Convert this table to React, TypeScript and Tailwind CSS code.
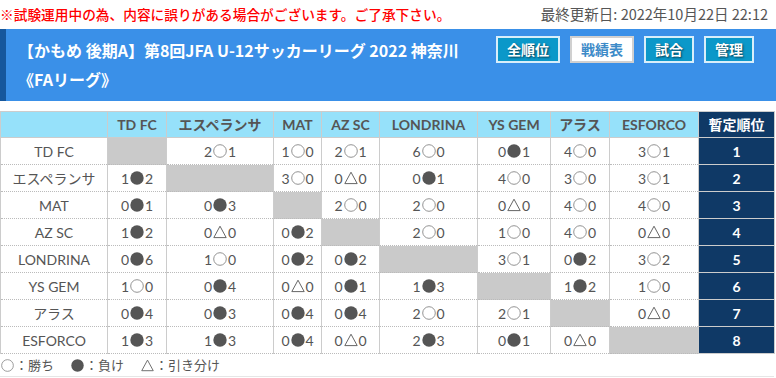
import React from "react";

const teams = ["TD FC", "エスペランサ", "MAT", "AZ SC", "LONDRINA", "YS GEM", "アラス", "ESFORCO"];
const widths = [107, 59, 107, 48, 58, 98, 73, 59, 89, 76];

const data: string[][] = [
  ["", "2○1", "1○0", "2○1", "6○0", "0●1", "4○0", "3○1"],
  ["1●2", "", "3○0", "0△0", "0●1", "4○0", "3○0", "3○1"],
  ["0●1", "0●3", "", "2○0", "2○0", "0△0", "4○0", "4○0"],
  ["1●2", "0△0", "0●2", "", "2○0", "1○0", "4○0", "0△0"],
  ["0●6", "1○0", "0●2", "0●2", "", "3○1", "0●2", "3○2"],
  ["1○0", "0●4", "0△0", "0●1", "1●3", "", "1●2", "1○0"],
  ["0●4", "0●3", "0●4", "0●4", "2○0", "2○1", "", "0△0"],
  ["1●3", "1●3", "0●4", "0△0", "2●3", "0●1", "0△0", ""],
];

function Mark({ m, size = 14 }: { m: string; size?: number }) {
  if (m === "○")
    return (
      <svg width={size} height={size} viewBox="0 0 14 14" className="inline-block mx-[1px] align-[-1px]">
        <circle cx="7" cy="7" r="6.3" fill="none" stroke="#888" strokeWidth="0.9" />
      </svg>
    );
  if (m === "●")
    return (
      <svg width={size} height={size} viewBox="0 0 14 14" className="inline-block mx-[1px] align-[-1px]">
        <circle cx="7" cy="7" r="6.7" fill="#555" />
      </svg>
    );
  return (
    <svg width={size} height={size} viewBox="0 0 14 14" className="inline-block mx-[1px] align-[-1px]">
      <path d="M7 1.2 L13.2 12.6 L0.8 12.6 Z" fill="none" stroke="#666" strokeWidth="1" />
    </svg>
  );
}

function Score({ s }: { s: string }) {
  if (!s) return null;
  return (
    <span>
      {s[0]}
      <Mark m={s[1]} />
      {s[2]}
    </span>
  );
}

const cellCls =
  "border-x border-x-[#cccccc] border-y border-y-[#bbbbbb] [border-top-style:dotted] [border-bottom-style:dotted] [border-left-style:solid] [border-right-style:solid] text-[14px] text-[#555] text-center p-0";

export default function App() {
  const font = { fontFamily: "Lato, 'Noto Sans CJK JP', sans-serif" };
  return (
    <div className="w-[776px] h-[378px] bg-white overflow-hidden" style={{ fontFamily: "'Noto Sans CJK JP', sans-serif" }}>
      <div className="h-[29px] flex items-center justify-between pr-[8px]">
        <div className="text-[13.7px] text-[#ff0000] font-medium leading-none">
          ※試験運用中の為、内容に誤りがある場合がございます。ご了承下さい。
        </div>
        <div className="text-[14.5px] text-[#555] leading-none">最終更新日: 2022年10月22日 22:12</div>
      </div>
      <div className="h-[72px] bg-[#3a90e8] border-l-[6px] border-[#16579c] flex justify-between pl-[12px] pr-[22px]">
        <div className="pt-[7px] text-white font-bold text-[16px] leading-[29px]">
          【かもめ 後期A】第8回JFA U-12サッカーリーグ 2022 神奈川
          <br />
          《FAリーグ》
        </div>
        <div className="flex gap-[10px] pt-[7px]">
          {["全順位", "戦績表", "試合", "管理"].map((t, i) => (
            <div
              key={t}
              className={
                "h-[27px] flex items-center justify-center text-[14px] font-bold border-2 " +
                (i === 1
                  ? "bg-white text-[#3d8bc8] border-[#d0d0d0]"
                  : "bg-[#0b98c9] text-white border-[#d8eefa]") +
                (i < 2 ? " w-[64px]" : " w-[50px]")
              }
              style={i === 1 ? undefined : { textShadow: "1px 1px 2px rgba(0,0,0,0.6)" }}
            >
              {t}
            </div>
          ))}
        </div>
      </div>
      <div className="h-[10px]" />
      <table className="border-collapse table-fixed w-[774px]" style={font}>
        <colgroup>
          {widths.map((w, i) => (
            <col key={i} style={{ width: w }} />
          ))}
        </colgroup>
        <thead>
          <tr className="h-[26px]">
            <th className="bg-[#96e1fa] border border-[#cccccc]" />
            {teams.map((t) => (
              <th key={t} className="bg-[#96e1fa] border border-[#cccccc] text-[14px] font-bold text-[#555] text-center p-0">
                {t}
              </th>
            ))}
            <th className="bg-[#0f3966] border border-[#cccccc] text-[14px] font-bold text-white text-center p-0">暫定順位</th>
          </tr>
        </thead>
        <tbody>
          {teams.map((t, r) => (
            <tr key={t} className="h-[27px]">
              <td className={cellCls}>{t}</td>
              {data[r].map((s, c) => (
                <td key={c} className={cellCls + (s === "" ? " bg-[#cacaca]" : "")}>
                  <Score s={s} />
                </td>
              ))}
              <td className="bg-[#0f3966] border border-[#cccccc] text-[14px] font-bold text-white text-center p-0">{r + 1}</td>
            </tr>
          ))}
        </tbody>
      </table>
      <div className="h-[23px] flex items-center text-[13px] text-[#555] border-b border-[#e6e6e6] w-[774px]">
        <span className="inline-flex items-center">
          <Mark m="○" size={13} />
          ：勝ち
        </span>
        <span className="inline-flex items-center ml-[16px]">
          <Mark m="●" size={13} />
          ：負け
        </span>
        <span className="inline-flex items-center ml-[16px]">
          <Mark m="△" size={13} />
          ：引き分け
        </span>
      </div>
    </div>
  );
}
